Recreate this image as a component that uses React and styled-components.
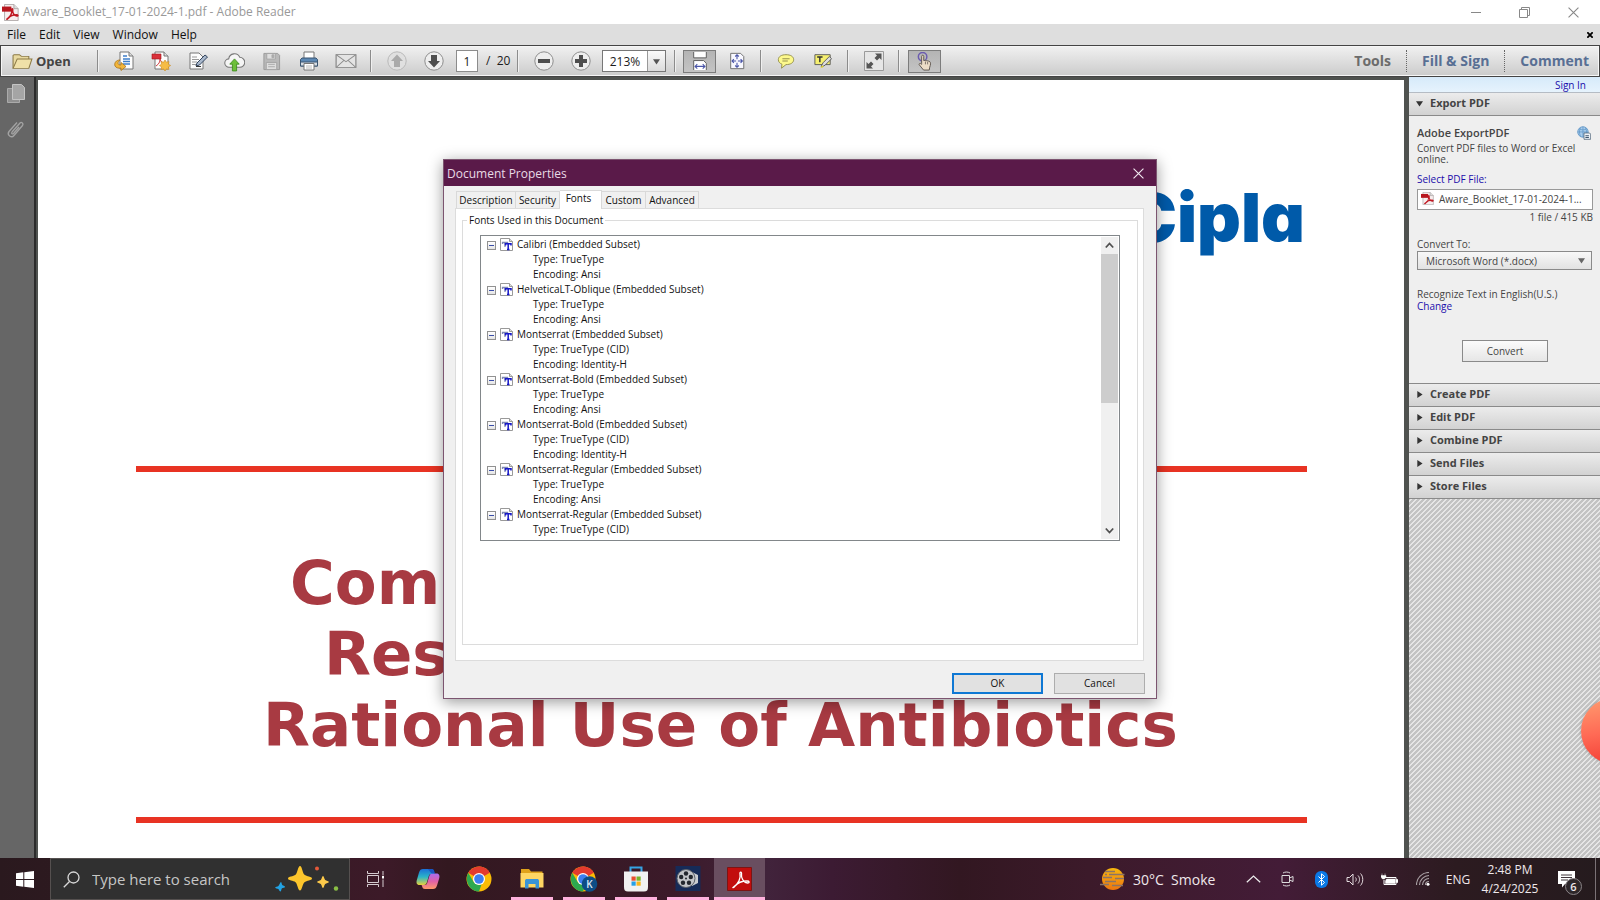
import React from "react";
import styled, { createGlobalStyle, css } from "styled-components";

const Global = createGlobalStyle`
  *, *::before, *::after { box-sizing: border-box; }
  body { margin: 0; overflow: hidden; font-family: "Open Sans", "Noto Sans", sans-serif; font-size: 12px; color: #1c1c1c; }
  button, input, select { font: inherit; color: inherit; margin: 0; padding: 0; }
  button { border: 0; background: none; }
  a { text-decoration: none; }
  svg { display: block; flex: none; }
  ul { list-style: none; margin: 0; padding: 0; }
`;

/* ---------- window frame ---------- */

const Desktop = styled.div`
  position: relative;
  display: flex;
  flex-direction: column;
  height: 100vh;
  overflow: hidden;
  background: #4f524f;
`;

const TitleBar = styled.header`
  display: flex;
  align-items: center;
  height: 24px;
  padding-left: 2px;
  background: #fff;
  color: #999;
`;

const WindowTitle = styled.h1`
  flex: 1;
  margin: 0 0 0 4px;
  font-size: 12px;
  font-weight: 400;
  line-height: 24px;
`;

const CaptionButton = styled.button`
  display: flex;
  align-items: center;
  justify-content: center;
  width: 49px;
  height: 24px;
`;

const CaptionGroup = styled.div`
  display: flex;
  padding-right: 2px;
`;

const MenuBar = styled.nav`
  display: flex;
  align-items: center;
  gap: 13px;
  height: 21px;
  padding: 0 7px;
  background: #dedede;
  color: #111;
`;

const MenuItem = styled.button`
  line-height: 20px;
`;

const CloseDoc = styled.button`
  margin-left: auto;
`;

/* ---------- toolbar ---------- */

const Toolbar = styled.div`
  display: flex;
  align-items: center;
  height: 32px;
  padding: 0 10px 0 11px;
  border: 1px solid #444;
  background: linear-gradient(#f1f1f1, #dedede 50%, #cbcbcb);
  box-shadow: inset 0 0 0 1px #f6f6f6;
`;

const OpenButton = styled.button`
  display: flex;
  align-items: center;
  gap: 3px;
  width: 79px;
  font-size: 13px;
  font-weight: 700;
  line-height: 20px;
  color: #444;
`;

const Separator = styled.span`
  width: 2px;
  height: 22px;
  margin: 0 6px;
  border-left: 1px solid #8c8c8c;
  border-right: 1px solid #f0f0f0;
`;

const ToolButton = styled.button`
  display: flex;
  align-items: center;
  justify-content: center;
  width: 33px;
  height: 23px;
  margin: 0 2px;
  ${(p) =>
    p.$pressed &&
    css`
      border: 1px solid #7c7c7c;
      background: linear-gradient(#b4b4b4, #c4c4c4);
    `}
`;

const PageInput = styled.input`
  width: 22px;
  height: 22px;
  margin-left: 4px;
  border: 1px solid #8c8c8c;
  background: #fff;
  text-align: center;
`;

const PageTotal = styled.span`
  width: 33px;
  padding-left: 8px;
  line-height: 20px;
  white-space: pre;
`;

const ZoomBox = styled.div`
  display: flex;
  width: 64px;
  height: 22px;
  margin: 0 3px;
  border: 1px solid #777;
  background: #fff;
`;

const ZoomInput = styled.input`
  width: 44px;
  border: 0;
  background: none;
  text-align: center;
`;

const ZoomArrow = styled.button`
  display: flex;
  flex: 1;
  align-items: center;
  justify-content: center;
  border-left: 1px solid #999;
  background: linear-gradient(#fafafa, #dcdcdc);
`;

const CommentTools = styled.div`
  display: flex;
  align-items: center;

  ${Separator} { margin: 0 5px; }
`;

const TaskTabs = styled.div`
  display: flex;
  align-items: center;
  margin-left: auto;
`;

const TaskTab = styled.button`
  height: 22px;
  padding: 0 15px;
  font-size: 14px;
  font-weight: 700;
  line-height: 20px;
  color: ${(p) => (p.$active ? "#6c6c6c" : "#586f94")};
  white-space: nowrap;

  & + & { border-left: 1px dotted #666; }
  &:last-child { padding-right: 0; }
`;

/* ---------- document ---------- */

const Main = styled.main`
  display: flex;
  flex: 1;
  min-height: 0;
`;

const NavRail = styled.aside`
  display: flex;
  flex-direction: column;
  align-items: center;
  gap: 16px;
  width: 36px;
  padding: 6px 2px 0 0;
  border-right: 2px solid #2c2c2c;
  background: #666;
`;

const RailButton = styled.button`
  width: 20px;
  height: 20px;
`;

const Viewport = styled.section`
  display: flex;
  flex: 1;
  min-width: 0;
  padding: 3px 5px 0 2px;
  background: #4f524f;
`;

const Page = styled.article`
  display: flex;
  flex: 1;
  flex-direction: column;
  min-width: 0;
  padding: 94px 97px 0 98px;
  background: #fff;
`;

const Wordmark = styled.div`
  align-self: flex-end;
  height: 292px;
  padding-right: 2px;
  font-family: Inter, sans-serif;
  font-size: 68px;
  font-weight: 900;
  font-feature-settings: "cv11";
  line-height: 86px;
  color: #005aa9;
`;

const Rule = styled.hr`
  width: 100%;
  height: 6px;
  margin: 0;
  border: 0;
  background: #e83323;
`;

const DocTitle = styled.h2`
  margin: 0;
  padding: 75px 0 57px;
  font-family: "DejaVu Sans", sans-serif;
  font-size: 61px;
  font-weight: 700;
  line-height: 71px;
  color: #a83a42;
`;

const TitleLine = styled.span`
  display: block;
  padding-left: ${(p) => p.$indent}px;
  white-space: nowrap;
`;

/* ---------- side panel ---------- */

const Panel = styled.aside`
  display: flex;
  flex-direction: column;
  width: 191px;
  color: #444;
  font-size: 10px;
  line-height: 12px;
  background: linear-gradient(135deg, #e6e6e6 10%, #c3c3c3 10% 40%, #e6e6e6 40% 60%, #c3c3c3 60% 90%, #e6e6e6 90%) 0 0 / 5px 5px;
`;

const SignInBar = styled.div`
  display: flex;
  align-items: center;
  justify-content: flex-end;
  height: 16px;
  padding-right: 14px;
  border-bottom: 1px solid #b5bcc4;
  background: linear-gradient(#d6eafa, #e6f3fd);
`;

const BlueLink = styled.a`
  color: #1a0dab;
`;

const PanelHeader = styled.button`
  display: flex;
  align-items: center;
  gap: 7px;
  height: 23px;
  padding: 0 0 2px 7px;
  border-bottom: 1px solid #8a8a8a;
  background: linear-gradient(#ececec, #d2d2d2);
  font-size: 11px;
  font-weight: 700;
  line-height: 16px;
  color: #444;
`;

const PanelBody = styled.div`
  display: flex;
  flex-direction: column;
  height: 268px;
  padding: 10px 7px 0 8px;
  border-bottom: 1px solid #8a8a8a;
  background: #efefef;
`;

const BodyTitle = styled.h3`
  display: flex;
  justify-content: space-between;
  height: 17px;
  margin: 0;
  padding-right: 2px;
  font-size: 11px;
  font-weight: 600;
  line-height: 14px;
`;

const Blurb = styled.p`
  width: 160px;
  margin: 0;
  line-height: 11px;
`;

const SelectLabel = styled.a`
  margin-top: 8px;
  color: #1a0dab;
`;

const FileBox = styled.div`
  display: flex;
  align-items: center;
  gap: 5px;
  height: 21px;
  margin-top: 4px;
  padding: 0 3px 2px;
  border: 1px solid #999;
  background: #fff;
  white-space: nowrap;
`;

const FileMeta = styled.span`
  margin-top: 1px;
  text-align: right;
`;

const FieldLabel = styled.label`
  margin-top: 15px;
`;

const SelectWrap = styled.div`
  display: grid;
  align-items: center;
  margin-top: 1px;
  padding-right: 1px;

  > * { grid-area: 1 / 1; }
  > svg { justify-self: end; margin-right: 7px; pointer-events: none; }
`;

const Select = styled.select`
  appearance: none;
  width: 100%;
  height: 19px;
  padding-left: 8px;
  border: 1px solid #8a8a8a;
  border-radius: 0;
  background: linear-gradient(#f8f8f8, #e2e2e2);
`;

const Language = styled.p`
  display: flex;
  flex-direction: column;
  align-items: flex-start;
  margin: 18px 0 0;
  line-height: 12px;
`;

const ConvertButton = styled.button`
  align-self: center;
  width: 86px;
  height: 22px;
  margin-top: 28px;
  border: 1px solid #8a8a8a;
  background: linear-gradient(#fbfbfb, #e6e6e6);
`;

const Bubble = styled.div`
  position: absolute;
  right: -47px;
  bottom: 136px;
  width: 66px;
  height: 66px;
  border-radius: 50%;
  background: linear-gradient(170deg, #ff9d70, #ff6a55 50%, #f0372f);
  box-shadow: 0 0 3px rgba(0, 0, 0, 0.3);
`;

/* ---------- dialog ---------- */

const DialogLayer = styled.div`
  position: absolute;
  inset: 0 0 42px;
  display: flex;
  align-items: center;
  justify-content: center;
  pointer-events: none;
`;

const Dialog = styled.section`
  width: 714px;
  border: 1px solid #7c5570;
  background: #f0f0f0;
  box-shadow: 0 3px 14px rgba(0, 0, 0, 0.4);
  font-size: 10px;
  line-height: 15px;
  color: #111;
  pointer-events: auto;
`;

const DialogBar = styled.header`
  display: flex;
  align-items: center;
  justify-content: space-between;
  height: 26px;
  padding: 0 12px 0 3px;
  background: #5a1a49;
  color: #e9dbe6;
`;

const DialogTitle = styled.h2`
  margin: 0;
  font-size: 12px;
  font-weight: 400;
`;

const DialogBody = styled.div`
  padding: 4px 11px;
`;

const TabList = styled.div`
  display: flex;
  align-items: flex-end;
  height: 18px;
  padding-left: 1px;
`;

const Tab = styled.button`
  width: ${(p) => p.$width}px;
  height: 17px;
  border: 1px solid #d9d9d9;
  border-bottom: 0;
  line-height: 15px;
  white-space: nowrap;

  & + & { border-left: 0; }
  ${(p) =>
    p.$active &&
    css`
      height: 19px;
      margin-bottom: -1px;
      padding: 0 4px 3px 0;
      background: #fff;
    `}
`;

const TabPanel = styled.div`
  height: 453px;
  margin-right: 1px;
  padding: 4px 5px 15px 6px;
  border: 1px solid #dcdcdc;
  background: #fff;
`;

const Group = styled.fieldset`
  height: 432px;
  margin: 0;
  padding: 8px 17px 0;
  border: 1px solid #dcdcdc;

  legend { margin-left: -13px; padding: 0 2px; line-height: 14px; }
`;

const ListBox = styled.div`
  display: flex;
  height: 306px;
  padding: 1px;
  border: 1px solid #82878a;
  background: #fff;
`;

const Tree = styled.ul`
  flex: 1;
  overflow: hidden;
`;

const FontRow = styled.div`
  display: flex;
  align-items: center;
  height: 15px;
  padding-left: 5px;
`;

const Collapse = styled.button`
  display: flex;
  align-items: center;
  justify-content: center;
  width: 9px;
  height: 9px;
  margin: 2px 4px 0 0;
  border: 1px solid #919191;
  background: linear-gradient(#fff, #e4e4e4);

  &::after { content: ""; width: 5px; height: 1px; background: #3a4ea8; }
`;

const FontName = styled.span`
  margin-left: 4px;
`;

const Detail = styled.li`
  height: 15px;
  padding-left: 51px;
`;

const ScrollBar = styled.div`
  display: flex;
  flex-direction: column;
  justify-content: space-between;
  width: 17px;
  background: #f0f0f0;
`;

const ScrollButton = styled.button`
  display: flex;
  align-items: center;
  justify-content: center;
  height: 17px;
`;

const Thumb = styled.div`
  height: 149px;
  margin-bottom: auto;
  background: #cdcdcd;
`;

const Actions = styled.footer`
  display: flex;
  justify-content: flex-end;
  gap: 11px;
  padding-top: 12px;
`;

const ActionButton = styled.button`
  width: 91px;
  height: 21px;
  border: ${(p) => (p.$primary ? "2px solid #0f78d4" : "1px solid #adadad")};
  background: #e1e1e1;
`;

/* ---------- taskbar ---------- */

const Taskbar = styled.footer`
  display: flex;
  align-items: stretch;
  height: 42px;
  color: #efe8eb;
  background: linear-gradient(90deg, #2a191e, #3c1a28 24%, #331820 28%, #3b1a29 42%, #41233b 48%, #3c1b33 52%, #321721 60%, #3c1a2a 68%, #431c37 80%, #2c1b20 91%, #251b1e);
`;

const StartButton = styled.button`
  display: flex;
  align-items: center;
  justify-content: center;
  width: 50px;
`;

const SearchBox = styled.label`
  display: flex;
  align-items: center;
  width: 300px;
  padding: 0 10px 0 12px;
  border: 1px solid #55504f;
  background: #303030;
`;

const SearchInput = styled.input`
  flex: 1;
  min-width: 0;
  margin-left: 12px;
  border: 0;
  outline: 0;
  background: none;
  font-size: 15px;
  &::placeholder { color: #c6c6c6; opacity: 1; }
`;

const AppButton = styled.button`
  display: flex;
  align-items: center;
  justify-content: center;
  width: ${(p) => (p.$active ? 51 : 42)}px;
  margin: 0 ${(p) => (p.$active ? 0 : 5)}px;
  padding-top: 2px;
  border-bottom: 3px solid ${(p) => (p.$open || p.$active ? "#ffb1dd" : "transparent")};
  background: ${(p) => (p.$active ? "#694e60" : "none")};
  background-clip: padding-box;
`;

const Tray = styled.div`
  display: flex;
  align-items: center;
  margin-left: auto;
`;

const Weather = styled.button`
  display: flex;
  align-items: center;
  gap: 8px;
  width: 136px;
  font-size: 14px;
  white-space: pre;
`;

const TrayButton = styled.button`
  display: flex;
  align-items: center;
  justify-content: center;
  width: 34px;
  height: 42px;
`;

const InputLanguage = styled.button`
  width: 36px;
`;

const Clock = styled.time`
  width: 68px;
  line-height: 19px;
  text-align: center;
`;

const Notices = styled.button`
  position: relative;
  width: 46px;
  height: 42px;
  margin-right: 5px;
  padding-left: 14px;
`;

const NoticeCount = styled.span`
  position: absolute;
  left: 21px;
  top: 20px;
  width: 17px;
  height: 17px;
  border: 1px solid #8b8487;
  border-radius: 50%;
  background: #2d2629;
  font-size: 11px;
  font-weight: 600;
  line-height: 15px;
`;

const ShowDesktop = styled.button`
  width: 5px;
  height: 42px;
  border-left: 1px solid #7b7276;
`;

/* ---------- icons ---------- */

const Icon = ({ size = 20, w = size, box = 20, children, ...rest }) => (
  <svg width={w} height={size} viewBox={`0 0 ${box} ${box}`} fill="none" aria-hidden="true" {...rest}>
    {children}
  </svg>
);

const Trefoil = (p) => (
  <path d="M4 18c5-3 7.500-9 6.500-13C10 2.500 12.500 2.500 12 5.500 11.500 9 14 13.500 18 14c2.500 0 2-2-.5-2C12.500 12 8 14 5.500 17 4 19 2.500 19 4 18z" strokeLinejoin="round" {...p} />
);

const PdfFile = ({ size = 17 }) => (
  <Icon size={size}>
    <path d="M3 .5h11l5 5v14H3z" fill="#f7eeee" stroke="#a7a0a0" />
    <path d="M14 .5v5h5" fill="#ddd" stroke="#a7a0a0" />
    <path d="M0 3h11v6H0z" fill="#b8161e" />
    <g transform="translate(3 3) scale(.8)"><Trefoil stroke="#c01822" strokeWidth="2.200" /></g>
  </Icon>
);

const Sheet = ({ x = 4 }) => (
  <>
    <path d={`M${x} 1h9l4 4v13H${x}z`} fill="#fdfdfd" stroke="#777" />
    <path d="M13 1v4h4" stroke="#777" fill="#ddd" />
  </>
);

const FolderIcon = () => (
  <Icon size={17} w={21} preserveAspectRatio="none">
    <path d="M1 18V3l1-1h5l2 2h7v3" fill="#e8d9a0" stroke="#8c7a45" />
    <path d="M1 18 5 7h14l-3 11z" fill="#f0e1a8" stroke="#8c7a45" />
  </Icon>
);

const ShareIcon = () => (
  <Icon>
    <path d="M6 1h9l4 4v13H6z" fill="#fdfdfd" stroke="#777" />
    <path d="M15 1v4h4" stroke="#777" fill="#ddd" />
    <path d="M9 5h4M9 8h7M9 10.500h7M9 13h7" stroke="#3f7fca" strokeWidth="1.500" />
    <path d="M6 9c-4 0-6 3-5 6 1 2 4 2.500 6 2v2.500l5-4-5-4V14c-2 0-3-.5-3-2 0-1 1-2 2-3z" fill="#f2b63c" stroke="#a9741a" strokeWidth=".8" />
  </Icon>
);

const CreateIcon = () => (
  <Icon>
    <Sheet />
    <path d="M1 3h9v5H1z" fill="#d9303a" stroke="#a0151d" strokeWidth=".6" />
    <path d="M5 15c3-2 4-4 4-7 1 3 2 4 5 4" stroke="#cf3a40" />
    <path d="m14 9 1.400 2.200 2.600-.6-.6 2.600 2.200 1.300-2.200 1.400.6 2.600-2.600-.6L14 20l-1.400-2.100-2.600.6.6-2.600-2.200-1.400 2.200-1.300-.6-2.600 2.600.6z" fill="#f6bc45" stroke="#c98a22" strokeWidth=".6" />
  </Icon>
);

const SignIcon = () => (
  <Icon>
    <path d="M2 2h9l4 4v12H2z" fill="#fdfdfd" stroke="#777" />
    <path d="M4 6h5M4 8.500h7M4 11h5M4 13.500h4" stroke="#999" />
    <path d="m8 15 1-3 8-8 2.500 2-8 8z" fill="#a9b8cc" stroke="#33455f" />
    <path d="M8 15.500h5" stroke="#333" />
  </Icon>
);

const CloudIcon = () => (
  <Icon size={21}>
    <path d="M5 15.500a4 4 0 0 1-.5-8 5.500 5.500 0 0 1 10.500-1.500 4.700 4.700 0 0 1 0 9.500z" fill="#f5f5f5" stroke="#777" />
    <path d="M10 7.500 14.500 12.500h-2.500V19H8v-6.500H5.500z" fill="#6dbf3a" stroke="#3c8a1a" strokeWidth=".8" />
  </Icon>
);

const SaveIcon = () => (
  <Icon size={19}>
    <path d="M2 1.500h14.500l2 2v15H2z" fill="#b9b9b9" stroke="#9a9a9a" />
    <path d="M5 1.500h9v6H5zM4.500 11h11v7.500h-11z" fill="#dedede" stroke="#a4a4a4" />
    <path d="M10.500 3h2v3h-2zM6.500 13h7M6.500 15.500h7" fill="#aaa" stroke="#aaa" />
  </Icon>
);

const PrintIcon = () => (
  <Icon size={20}>
    <path d="M5 1h10v7H5z" fill="#fff" stroke="#777" />
    <path d="M1.500 8.500 3 7h14l1.500 1.500V15h-17z" fill="#5c88b4" stroke="#3b5570" />
    <path d="M1.500 11h17v4h-17z" fill="#d6dde4" stroke="#3b5570" />
    <path d="M5 12.500h10V19H5z" fill="#fff" stroke="#777" />
    <path d="M7 15h6M7 17h6" stroke="#bbb" />
  </Icon>
);

const MailIcon = () => (
  <Icon size={16} w={22} preserveAspectRatio="none">
    <path d="M1 2h18v16H1z" fill="#e4e4e4" stroke="#808080" />
    <path d="m1 2 9 9 9-9M1 18l7-8.500M19 18l-7-8.500" stroke="#8c8c8c" />
  </Icon>
);

const RoundIcon = ({ d, faded }) => (
  <Icon size={20}>
    <circle cx="10" cy="10" r="9.200" fill={faded ? "#e0e0e0" : "#eee"} stroke={faded ? "#b9b9b9" : "#8e8e8e"} />
    <path d={d} fill={faded ? "#aaa" : "#4e4e4e"} />
  </Icon>
);

const FitWidthIcon = () => (
  <Icon size={18}>
    <path d="M3 0v6.500h14V0" fill="#fff" stroke="#555" />
    <path d="M3 20V9.500h11l3 3V20" fill="#fff" stroke="#555" />
    <path d="M5 16h10M7 13.500 4.500 16 7 18.500M13 13.500l2.500 2.500-2.500 2.500" stroke="#4a55a8" strokeWidth="1.200" />
  </Icon>
);

const FitPageIcon = () => (
  <Icon size={18}>
    <path d="M3 1.500h11l3.500 3.500v13.500H3z" fill="#f8f8ff" stroke="#666" />
    <path d="M10 3v5M10 12v5M4.500 10H9M11 10h5M8 5l2-2 2 2M8 15l2 2 2-2M6.500 8l-2 2 2 2M14 8l2 2-2 2" stroke="#4a55a8" strokeWidth="1.200" />
  </Icon>
);

const NoteIcon = () => (
  <Icon size={18}>
    <path d="M10 3c5 0 8.500 2 8.500 5.500S15 14 10 14l-5 4 .5-4.500C3 12.500 1.500 11 1.500 8.500 1.500 5 5 3 10 3z" fill="#fdf98c" stroke="#8f8a45" />
    <path d="M6 7.500h8M6 10h6" stroke="#8b8648" />
  </Icon>
);

const HighlightIcon = () => (
  <Icon size={18}>
    <path d="M1 3h17v11H1z" fill="#f6f070" stroke="#555" />
    <path d="M3.500 5.500h6M6.500 5.500v6" stroke="#333" strokeWidth="1.600" />
    <path d="m8 16 2-4 7-7 2.500 2.500-7 7-3.500 2z" fill="#ddd" stroke="#555" />
    <path d="m7 18 2-3 2 1.500z" fill="#e6d820" />
  </Icon>
);

const FullscreenIcon = () => (
  <Icon size={20}>
    <path d="M.5.5h19v19H.5z" fill="#e6e6e6" stroke="#9a9a9a" />
    <path d="M17.500 2.500v6.500l-2-2-2.500 2.500-2.500-2.500L13 4.500l-2-2zM2.500 17.500V11l2 2L7 10.500 9.500 13 7 15.500l2 2z" fill="#555" />
  </Icon>
);

const HandIcon = () => (
  <Icon size={19}>
    <circle cx="8" cy="5" r="4.500" stroke="#6b5bb0" strokeWidth="1.500" />
    <path d="M7 12V4.500c0-1.500 2.200-1.500 2.200 0V9l1.500-.3 1.800.6 1.500.2 1.700.8c1 .8.800 3-.2 5.700L15 19H9l-4.500-5.500c-.8-1.200.8-2.200 2.500-.5z" fill="#ecdcc6" stroke="#5f5650" />
    <path d="M11 10v3M13.300 10.500V13" stroke="#5f5650" strokeWidth=".8" />
  </Icon>
);

const Arrow = ({ down, color = "#333", size = 7 }) => (
  <svg width={size} height={size} viewBox="0 0 8 8" aria-hidden="true">
    <path d={down ? "M0 1.500h8L4 7.500z" : "M1.500 0v8l6-4z"} fill={color} />
  </svg>
);

const Cross = ({ size, color, stroke = 1 }) => (
  <svg width={size} height={size} viewBox="0 0 10 10" aria-hidden="true">
    <path d="m.5.5 9 9M9.500.5l-9 9" stroke={color} strokeWidth={stroke} />
  </svg>
);

const TrueTypeIcon = () => (
  <svg width="13" height="13" viewBox="0 0 13 13" aria-hidden="true">
    <path d="M.5.5h9l3 3v9H.5z" fill="#fff" stroke="#999" />
    <path d="M9.500.5v3h3" fill="#ddd" stroke="#999" />
    <path d="M2.500 6V4.500h5V6M5 4.500V9" stroke="#7f88b4" strokeWidth="1.300" fill="none" />
    <path d="M5.500 7.500V5.800h5.500v1.700M8.200 6v5.500M7 11.500h2.500" stroke="#1616c8" strokeWidth="1.500" fill="none" />
  </svg>
);

const GlobeIcon = () => (
  <Icon size={14}>
    <circle cx="8.500" cy="8.500" r="7.500" fill="#a9cdec" stroke="#4a86bd" />
    <path d="M1 8.500h15M8.500 1v15M3 4c3 2 8 2 11 0M5 2.500c-2 4-2 8 0 12M12 2.500c2 4 2 6 1 8" stroke="#5b93c6" />
    <path d="M10 10h8l1.500 1.500V19H10z" fill="#eef3f8" stroke="#3f566c" />
    <path d="M12 14h5M12 16.500h5" stroke="#3f566c" strokeWidth="1.500" />
  </Icon>
);

const Chrome = ({ badge }) => (
  <svg width="28" height="26" viewBox="0 0 28 26" aria-hidden="true">
    <circle cx="13" cy="13" r="12.500" fill="#fbbc05" />
    <path d="M13 13 2.200 6.700A12.500 12.500 0 0 1 23.800 6.700z" fill="#e33b2e" />
    <path d="M13 .5a12.500 12.500 0 0 1 10.900 6.500H13z" fill="#e33b2e" />
    <path d="M2.200 6.700 8 16.500l5 2.500 2.500-.5L13 25.500C4 25.500-2 15.500 2.200 6.700z" fill="#2da94f" />
    <circle cx="13" cy="13" r="6" fill="#fff" />
    <circle cx="13" cy="13" r="4.800" fill="#3d7ff0" />
    {badge && (
      <>
        <circle cx="19.500" cy="18" r="7.800" fill="#0d4d86" />
        <text x="19.500" y="21.500" fill="#dce9f5" fontSize="10" fontWeight="600" textAnchor="middle">{badge}</text>
      </>
    )}
  </svg>
);

const Copilot = () => (
  <svg width="24" height="22" viewBox="0 0 24 22" aria-hidden="true">
    <defs>
      <linearGradient id="cpA" x1="0" y1="0" x2="0" y2="1"><stop offset="0" stopColor="#1a6fd8" /><stop offset=".5" stopColor="#2bb5c8" /><stop offset="1" stopColor="#e8d23a" /></linearGradient>
      <linearGradient id="cpB" x1="0" y1="0" x2="0" y2="1"><stop offset="0" stopColor="#a86df0" /><stop offset=".5" stopColor="#e060a8" /><stop offset="1" stopColor="#ff9a6a" /></linearGradient>
    </defs>
    <path d="M7 1h8c2 0 2.500 1 3 3l.5 2h-3c-2 0-2.500 1-3 3l-1.500 5c-.5 2-1.500 3-3 3H3.500C.5 17 0 14.500 1 11.500l2-7C3.700 2 5 1 7 1z" fill="url(#cpA)" />
    <path d="M17 21H9c-2 0-2.500-1-3-3l-.5-1h3c2 0 2.500-1 3-3L13 9c.5-2 1.500-3.500 3-3.500h4.500c3 0 3.500 2.500 2.500 5.500l-2 6.500C20.300 20 19 21 17 21z" fill="url(#cpB)" />
    <path d="M12 1h4c1.500 0 2 1 2.500 3l.5 1.500h-3.500z" fill="#1956c4" />
  </svg>
);

const Explorer = () => (
  <svg width="24" height="21" viewBox="0 0 24 21" aria-hidden="true">
    <path d="M1 1h8l2 2.500h11.500V19H1z" fill="#e0a21b" />
    <path d="M.5 5h23v14.500H.5z" fill="#ffd663" />
    <path d="M5 20.500V13c0-1.500.8-2 2-2h10c1.200 0 2 .5 2 2v7.500h-3.500V16h-7v4.500z" fill="#3a94d6" />
  </svg>
);

const Store = () => (
  <svg width="26" height="26" viewBox="0 0 26 26" aria-hidden="true">
    <path d="M7.500 6V1.500h11V6" stroke="#35a4e4" strokeWidth="2" fill="none" />
    <path d="M1 5.500h24V21c0 3-1 4.500-4 4.500H5c-3 0-4-1.500-4-4.500z" fill="#f1f1f1" />
    <path d="M8.500 10.500h4.200v4.200H8.500z" fill="#e8502f" />
    <path d="M13.500 10.500h4.200v4.200h-4.200z" fill="#77b52a" />
    <path d="M8.500 15.500h4.200v4.200H8.500z" fill="#26a0e6" />
    <path d="M13.500 15.500h4.200v4.200h-4.200z" fill="#f7b51c" />
  </svg>
);

const Film = () => (
  <svg width="26" height="25" viewBox="0 0 26 25" aria-hidden="true">
    <path d="M.5 0h25v25H.5z" fill="#162b58" />
    <path d="M17 6l6 3v8l-6 3z" fill="#c9ccd0" />
    <circle cx="11" cy="12.500" r="9" fill="#c3c5c9" stroke="#5b6068" />
    <g fill="#23272e">
      <circle cx="11" cy="7.500" r="2.200" /><circle cx="6.200" cy="11" r="2.200" /><circle cx="15.800" cy="11" r="2.200" />
      <circle cx="8" cy="16.700" r="2.200" /><circle cx="14" cy="16.700" r="2.200" /><circle cx="11" cy="12.500" r="1" />
    </g>
  </svg>
);

const Adobe = () => (
  <svg width="25" height="24" viewBox="0 0 25 24" aria-hidden="true">
    <path d="M.5.5h24v23H.5z" fill="#c20d0d" stroke="#7d1414" />
    <g transform="translate(2.500 2)"><Trefoil stroke="#fff" strokeWidth="1.300" fill="none" /></g>
  </svg>
);

const Sparkles = () => (
  <svg width="66" height="28" viewBox="0 0 66 28" aria-hidden="true">
    <path d="M27 1c2 0 2.500 7 4.500 8.800S39 11.500 39 13.500s-5.500 2-7.500 3.700S29 25.500 27 25.500s-2.500-6.500-4.500-8.300S15 15.500 15 13.500s5.500-2 7.500-3.700S25 1 27 1z" fill="#fcc52c" />
    <path d="M50 11c1 0 1.300 3 2.200 4s3.800 1 3.800 2-2.900 1.200-3.800 2-1.200 4-2.200 4-1.300-3.200-2.200-4-3.800-1-3.800-2 2.900-1 3.800-2 1.200-4 2.200-4z" fill="#fcc94a" />
    <path d="M8 17c.8 0 .6 2.800 1.500 3.300S12 21 12 22s-2.200.6-3 1.300-.7 3.700-1.700 3.200S6 24.500 5.300 24 2 23.500 2.200 22.500s2.300-.8 3.200-1.500S7.200 17 8 17z" fill="#22a2e4" />
    <circle cx="44" cy="3.500" r="2" fill="#e5593a" />
    <circle cx="63" cy="23.500" r="2.200" fill="#8abf45" />
  </svg>
);

const SmokeSun = () => (
  <svg width="25" height="24" viewBox="0 0 25 24" aria-hidden="true">
    <defs><linearGradient id="sun" x1="0" y1="0" x2="0" y2="1"><stop offset="0" stopColor="#f8b80e" /><stop offset="1" stopColor="#ec7410" /></linearGradient></defs>
    <circle cx="13" cy="12" r="11" fill="url(#sun)" />
    <path d="M5 4.500h10M9 7.500h15.500M3 10.500h9M15 11.500h9M5 14.500h11M0 17.500h9M12 18.500h11M5 7.500h2" stroke="#8b7466" strokeWidth="1.600" />
  </svg>
);

/* ---------- data ---------- */

const FONTS = [
  ["Calibri", "TrueType", "Ansi"],
  ["HelveticaLT-Oblique", "TrueType", "Ansi"],
  ["Montserrat", "TrueType (CID)", "Identity-H"],
  ["Montserrat-Bold", "TrueType", "Ansi"],
  ["Montserrat-Bold", "TrueType (CID)", "Identity-H"],
  ["Montserrat-Regular", "TrueType", "Ansi"],
  ["Montserrat-Regular", "TrueType (CID)", null],
];

const TABS = [
  ["Description", 60],
  ["Security", 44],
  ["Fonts", 42],
  ["Custom", 44],
  ["Advanced", 53],
];

const UP = "M10 3.500 16 10h-3v6H7v-6H4z";
const DOWN = "M10 16.500 16 10h-3V4H7v6H4z";
const MINUS = "M4 8h12v4H4z";
const PLUS = "M8 4h4v4h4v4h-4v4H8v-4H4V8h4z";

const MainToolbar = () => (
  <Toolbar>
    <OpenButton><FolderIcon />Open</OpenButton>
    <Separator />
    <ToolButton aria-label="Share"><ShareIcon /></ToolButton>
    <ToolButton aria-label="Create PDF online"><CreateIcon /></ToolButton>
    <ToolButton aria-label="Sign"><SignIcon /></ToolButton>
    <ToolButton aria-label="Upload"><CloudIcon /></ToolButton>
    <ToolButton aria-label="Save" disabled><SaveIcon /></ToolButton>
    <ToolButton aria-label="Print"><PrintIcon /></ToolButton>
    <ToolButton aria-label="Email"><MailIcon /></ToolButton>
    <Separator />
    <ToolButton aria-label="Previous page" disabled><RoundIcon d={UP} faded /></ToolButton>
    <ToolButton aria-label="Next page"><RoundIcon d={DOWN} /></ToolButton>
    <PageInput aria-label="Page number" defaultValue="1" />
    <PageTotal>{"/  20"}</PageTotal>
    <Separator />
    <ToolButton aria-label="Zoom out"><RoundIcon d={MINUS} /></ToolButton>
    <ToolButton aria-label="Zoom in"><RoundIcon d={PLUS} /></ToolButton>
    <ZoomBox>
      <ZoomInput aria-label="Zoom" defaultValue="213%" />
      <ZoomArrow aria-label="Zoom levels"><Arrow down color="#555" /></ZoomArrow>
    </ZoomBox>
    <CommentTools>
      <Separator />
      <ToolButton aria-label="Fit width" $pressed><FitWidthIcon /></ToolButton>
      <ToolButton aria-label="Fit page"><FitPageIcon /></ToolButton>
      <Separator />
      <ToolButton aria-label="Add note"><NoteIcon /></ToolButton>
      <ToolButton aria-label="Highlight text"><HighlightIcon /></ToolButton>
    </CommentTools>
    <Separator />
    <ToolButton aria-label="Full screen"><FullscreenIcon /></ToolButton>
    <Separator />
    <ToolButton aria-label="Touch mode" $pressed><HandIcon /></ToolButton>
    <TaskTabs>
      <TaskTab $active>Tools</TaskTab>
      <TaskTab>Fill &amp; Sign</TaskTab>
      <TaskTab>Comment</TaskTab>
    </TaskTabs>
  </Toolbar>
);

const SidePanel = () => (
  <Panel>
    <SignInBar><BlueLink href="#signin">Sign In</BlueLink></SignInBar>
    <PanelHeader><Arrow down />Export PDF</PanelHeader>
    <PanelBody>
      <BodyTitle>Adobe ExportPDF<GlobeIcon /></BodyTitle>
      <Blurb>Convert PDF files to Word or Excel online.</Blurb>
      <SelectLabel href="#select">Select PDF File:</SelectLabel>
      <FileBox><PdfFile size={13} />Aware_Booklet_17-01-2024-1...</FileBox>
      <FileMeta>1 file / 415 KB</FileMeta>
      <FieldLabel htmlFor="format">Convert To:</FieldLabel>
      <SelectWrap>
        <Select id="format"><option>Microsoft Word (*.docx)</option></Select>
        <Arrow down color="#666" />
      </SelectWrap>
      <Language>
        <span>Recognize Text in English(U.S.)</span>
        <BlueLink href="#language">Change</BlueLink>
      </Language>
      <ConvertButton>Convert</ConvertButton>
    </PanelBody>
    {["Create PDF", "Edit PDF", "Combine PDF", "Send Files", "Store Files"].map((t) => (
      <PanelHeader key={t}><Arrow />{t}</PanelHeader>
    ))}
  </Panel>
);

const PropertiesDialog = () => (
  <DialogLayer>
    <Dialog role="dialog" aria-labelledby="dialog-title">
      <DialogBar>
        <DialogTitle id="dialog-title">Document Properties</DialogTitle>
        <button aria-label="Close"><Cross size={11} color="#f3e9f1" /></button>
      </DialogBar>
      <DialogBody>
        <TabList role="tablist">
          {TABS.map(([name, width]) => (
            <Tab key={name} role="tab" $width={width} $active={name === "Fonts"} aria-selected={name === "Fonts"}>{name}</Tab>
          ))}
        </TabList>
        <TabPanel role="tabpanel">
          <Group>
            <legend>Fonts Used in this Document</legend>
            <ListBox>
              <Tree>
                {FONTS.map(([name, type, encoding], i) => (
                  <li key={i}>
                    <FontRow>
                      <Collapse aria-label={`Collapse ${name}`} />
                      <TrueTypeIcon />
                      <FontName>{name} (Embedded Subset)</FontName>
                    </FontRow>
                    <ul>
                      <Detail>Type: {type}</Detail>
                      {encoding && <Detail>Encoding: {encoding}</Detail>}
                    </ul>
                  </li>
                ))}
              </Tree>
              <ScrollBar>
                <ScrollButton aria-label="Scroll up">
                  <svg width="9" height="7" viewBox="0 0 9 7"><path d="m.8 5.500 3.700-4 3.700 4" stroke="#505050" strokeWidth="1.800" fill="none" /></svg>
                </ScrollButton>
                <Thumb />
                <ScrollButton aria-label="Scroll down">
                  <svg width="9" height="7" viewBox="0 0 9 7"><path d="m.8 1.500 3.700 4 3.700-4" stroke="#505050" strokeWidth="1.800" fill="none" /></svg>
                </ScrollButton>
              </ScrollBar>
            </ListBox>
          </Group>
        </TabPanel>
        <Actions>
          <ActionButton $primary>OK</ActionButton>
          <ActionButton>Cancel</ActionButton>
        </Actions>
      </DialogBody>
    </Dialog>
  </DialogLayer>
);

const WindowsTaskbar = () => (
  <Taskbar>
    <StartButton aria-label="Start">
      <svg width="18" height="17" viewBox="0 0 18 17"><path d="M0 2.300 7.300 1.300v6.700H0zM8.300 1.200 18 0v8H8.300zM0 9h7.300v6.700L0 14.700zM8.300 9H18v8l-9.700-1.200z" fill="#fff" /></svg>
    </StartButton>
    <SearchBox>
      <svg width="17" height="17" viewBox="0 0 17 17"><circle cx="10.500" cy="6.500" r="5.500" stroke="#d8d8d8" strokeWidth="1.300" fill="none" /><path d="M6.500 10.500.8 16.200" stroke="#d8d8d8" strokeWidth="1.300" /></svg>
      <SearchInput aria-label="Search" placeholder="Type here to search" />
      <Sparkles />
    </SearchBox>
    <AppButton aria-label="Task view">
      <svg width="18" height="16" viewBox="0 0 18 16"><path d="M.5 0v2.500h11V0M.5 16v-2.500h11V16M.5 4.500h11v7H.5zM16 0v4.500M16 8.500V16" stroke="#d5ccd0" fill="none" /><path d="M15 5h2v2.500h-2z" fill="#fff" /></svg>
    </AppButton>
    <AppButton aria-label="Copilot"><Copilot /></AppButton>
    <AppButton aria-label="Chrome"><Chrome /></AppButton>
    <AppButton aria-label="File Explorer" $open><Explorer /></AppButton>
    <AppButton aria-label="Chrome profile" $open><Chrome badge="K" /></AppButton>
    <AppButton aria-label="Store" $open><Store /></AppButton>
    <AppButton aria-label="Movie Maker" $open><Film /></AppButton>
    <AppButton aria-label="Adobe Reader" $active><Adobe /></AppButton>
    <Tray>
      <Weather><SmokeSun />{"30°C  Smoke"}</Weather>
      <TrayButton aria-label="Show hidden icons"><svg width="15" height="8" viewBox="0 0 15 8"><path d="m.8 7.300 6.700-6.300 6.700 6.300" stroke="#eee" strokeWidth="1.200" fill="none" /></svg></TrayButton>
      <TrayButton aria-label="Meet now"><svg width="13" height="16" viewBox="0 0 13 16"><path d="M1 4.500h7.500v7H1zM8.500 7l3.500-1.500v5L8.500 9M2 2c2-1.300 5-1.300 7 0M2 14c2 1.300 5 1.300 7 0" stroke="#ddd" fill="none" /></svg></TrayButton>
      <TrayButton aria-label="Bluetooth"><svg width="13" height="17" viewBox="0 0 13 17"><rect width="13" height="17" rx="6" fill="#0a78e6" /><path d="m3.500 5.500 6 6-3 2.700V2.800l3 2.700-6 6" stroke="#fff" fill="none" /></svg></TrayButton>
      <TrayButton aria-label="Volume"><svg width="18" height="15" viewBox="0 0 18 15"><path d="M1 5.500h2.500L7 2v11L3.500 9.500H1zM9.500 5.500c1 1 1 3 0 4M12 3.500c2 2 2 6 0 8M14.500 1.500c3 3 3 9 0 12" stroke="#e5dde0" fill="none" /></svg></TrayButton>
      <TrayButton aria-label="Battery"><svg width="17" height="13" viewBox="0 0 17 13"><path d="M4 4.500h11v7H3V7" stroke="#fff" fill="none" /><path d="M5.500 6H14v4.500H4.500V8zM15 6.500h2v3h-2zM1 .5v2M4 .5v2M0 2.500h5v1.500L3.500 6h-2L0 4z" fill="#fff" stroke="#fff" strokeWidth=".5" /></svg></TrayButton>
      <TrayButton aria-label="Wi-Fi"><svg width="14" height="14" viewBox="0 0 14 14"><path d="M.5 13C.5 6 6 .5 13 .5M3.500 13c0-5 4.500-9.500 9.500-9.500M6.500 13c0-3.500 3-6.500 6.500-6.500M9.500 13c0-2 1.500-3.500 3.500-3.500" stroke="#a89fa3" fill="none" strokeWidth="1.200" /><circle cx="12" cy="12.300" r="1.500" fill="#fff" /></svg></TrayButton>
      <InputLanguage>ENG</InputLanguage>
      <Clock>2:48 PM<br />4/24/2025</Clock>
      <Notices aria-label="Notifications, 6 new">
        <svg width="17" height="17" viewBox="0 0 17 17"><path d="M0 0h17v13H7l-3 3.500V13H0z" fill="#fff" /><path d="M3 4h11M3 6.500h11M3 9h7" stroke="#40363b" /></svg>
        <NoticeCount>6</NoticeCount>
      </Notices>
      <ShowDesktop aria-label="Show desktop" />
    </Tray>
  </Taskbar>
);

export default function App() {
  return (
    <Desktop>
      <Global />
      <TitleBar>
        <PdfFile />
        <WindowTitle>Aware_Booklet_17-01-2024-1.pdf - Adobe Reader</WindowTitle>
        <CaptionGroup>
          <CaptionButton aria-label="Minimize"><svg width="10" height="10" viewBox="0 0 10 10"><path d="M0 5.500h10" stroke="#888" /></svg></CaptionButton>
          <CaptionButton aria-label="Restore"><svg width="11" height="11" viewBox="0 0 11 11"><path d="M.5 2.500h8v8h-8zM2.500 2.500v-2h8v8h-2" stroke="#888" fill="none" /></svg></CaptionButton>
          <CaptionButton aria-label="Close"><Cross size={11} color="#888" /></CaptionButton>
        </CaptionGroup>
      </TitleBar>
      <MenuBar>
        {["File", "Edit", "View", "Window", "Help"].map((m) => <MenuItem key={m}>{m}</MenuItem>)}
        <CloseDoc aria-label="Close document"><Cross size={6} color="#000" stroke={3} /></CloseDoc>
      </MenuBar>
      <MainToolbar />
      <Main>
        <NavRail>
          <RailButton aria-label="Page thumbnails">
            <Icon><path d="M1.500 5.500h12v14h-12z" fill="#8f8f8f" stroke="#aaa" /><path d="M6.500 1.500h9l3 3v12h-12z" fill="#a5a5a5" stroke="#c4c4c4" /></Icon>
          </RailButton>
          <RailButton aria-label="Attachments">
            <Icon><path d="m6 13 8-9c1.500-1.500 4 .5 2.500 2.500l-8.500 10c-2.500 3-7.500-.5-5-4L11 3.500M6 13c-1 1.500.5 2.500 1.500 1.500L13 8" stroke="#a3a3a3" strokeWidth="1.300" /></Icon>
          </RailButton>
        </NavRail>
        <Viewport>
          <Page>
            <Wordmark>Cipla</Wordmark>
            <Rule />
            <DocTitle>
              <TitleLine $indent={154}>Com</TitleLine>
              <TitleLine $indent={188}>Res</TitleLine>
              <TitleLine $indent={127}>Rational Use of Antibiotics</TitleLine>
            </DocTitle>
            <Rule />
          </Page>
        </Viewport>
        <SidePanel />
      </Main>
      <WindowsTaskbar />
      <Bubble />
      <PropertiesDialog />
    </Desktop>
  );
}
